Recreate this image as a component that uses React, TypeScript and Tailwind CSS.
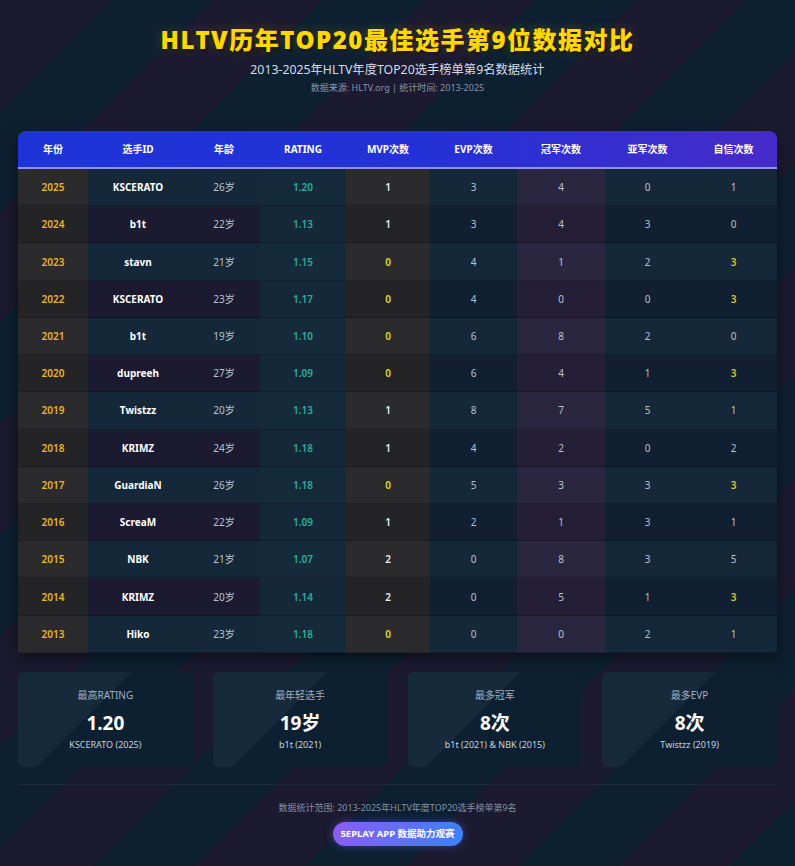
import React from "react";

type Row = {
  year: string;
  id: string;
  age: string;
  rating: string;
  mvp: number;
  evp: number;
  champ: number;
  runner: number;
  conf: number;
};

const rows: Row[] = [
  { year: "2025", id: "KSCERATO", age: "26岁", rating: "1.20", mvp: 1, evp: 3, champ: 4, runner: 0, conf: 1 },
  { year: "2024", id: "b1t", age: "22岁", rating: "1.13", mvp: 1, evp: 3, champ: 4, runner: 3, conf: 0 },
  { year: "2023", id: "stavn", age: "21岁", rating: "1.15", mvp: 0, evp: 4, champ: 1, runner: 2, conf: 3 },
  { year: "2022", id: "KSCERATO", age: "23岁", rating: "1.17", mvp: 0, evp: 4, champ: 0, runner: 0, conf: 3 },
  { year: "2021", id: "b1t", age: "19岁", rating: "1.10", mvp: 0, evp: 6, champ: 8, runner: 2, conf: 0 },
  { year: "2020", id: "dupreeh", age: "27岁", rating: "1.09", mvp: 0, evp: 6, champ: 4, runner: 1, conf: 3 },
  { year: "2019", id: "Twistzz", age: "20岁", rating: "1.13", mvp: 1, evp: 8, champ: 7, runner: 5, conf: 1 },
  { year: "2018", id: "KRIMZ", age: "24岁", rating: "1.18", mvp: 1, evp: 4, champ: 2, runner: 0, conf: 2 },
  { year: "2017", id: "GuardiaN", age: "26岁", rating: "1.18", mvp: 0, evp: 5, champ: 3, runner: 3, conf: 3 },
  { year: "2016", id: "ScreaM", age: "22岁", rating: "1.09", mvp: 1, evp: 2, champ: 1, runner: 3, conf: 1 },
  { year: "2015", id: "NBK", age: "21岁", rating: "1.07", mvp: 2, evp: 0, champ: 8, runner: 3, conf: 5 },
  { year: "2014", id: "KRIMZ", age: "20岁", rating: "1.14", mvp: 2, evp: 0, champ: 5, runner: 1, conf: 3 },
  { year: "2013", id: "Hiko", age: "23岁", rating: "1.18", mvp: 0, evp: 0, champ: 0, runner: 2, conf: 1 },
];

const headers = ["年份", "选手ID", "年龄", "RATING", "MVP次数", "EVP次数", "冠军次数", "亚军次数", "自信次数"];

const cards = [
  { label: "最高RATING", value: "1.20", sub: "KSCERATO (2025)" },
  { label: "最年轻选手", value: "19岁", sub: "b1t (2021)" },
  { label: "最多冠军", value: "8次", sub: "b1t (2021) & NBK (2015)" },
  { label: "最多EVP", value: "8次", sub: "Twistzz (2019)" },
];

const GRID = "grid grid-cols-[70px_100px_72px_86px_84px_87px_88px_85px_87px]";

export default function App() {
  return (
    <div className="min-h-[866px] w-full font-['Noto_Sans','Noto_Sans_CJK_SC',sans-serif] bg-[repeating-linear-gradient(135deg,#1c1a30_0px,#1c1a30_78px,#0d2032_78px,#0d2032_150px)]">
      <div className="px-[18px] pt-6">
        <h1 className="text-center text-[24px] font-black leading-8 tracking-[1.5px] text-[#ffd700] [text-shadow:2px_2px_4px_rgba(0,0,0,0.6),0_0_12px_rgba(255,215,0,0.25)]">
          HLTV历年TOP20最佳选手第9位数据对比
        </h1>
        <p className="mt-[5px] text-center text-[12.3px] leading-[18px] text-[#d5dce6]">
          2013-2025年HLTV年度TOP20选手榜单第9名数据统计
        </p>
        <p className="mt-[2px] text-center text-[9px] leading-[14px] text-[#8797ab]">
          数据来源: HLTV.org | 统计时间: 2013-2025
        </p>

        <div className="mt-[36px] overflow-hidden rounded-t-[8px] shadow-[0_6px_16px_rgba(0,0,0,0.45)]">
          <div className={`${GRID} h-[38px] items-center border-b-2 border-[#8c93f0] bg-[linear-gradient(90deg,#1d34d8_0%,#2431d6_55%,#472bc9_100%)]`}>
            {headers.map((h) => (
              <div key={h} className="text-center text-[10px] font-bold text-white">
                {h}
              </div>
            ))}
          </div>
          {rows.map((r, i) => {
            const a = i % 2 === 0;
            const base = a ? "bg-[#15283a]" : "bg-[#1b1a30]";
            const gray = a ? "bg-[#2b2b2d]" : "bg-[#242426]";
            const teal = a ? "bg-[#152a3a]" : "bg-[#14283a]";
            const purple = a ? "bg-[#2b2640]" : "bg-[#241f37]";
            const navy = a ? "bg-[#15283a]" : "bg-[#101f31]";
            const cell = "flex h-[37.23px] items-center justify-center text-[10px] shadow-[inset_0_-1px_0_rgba(0,0,0,0.22)]";
            return (
              <div key={r.year} className={GRID}>
                <div className={`${cell} ${gray} font-semibold text-[#e9b52a]`}>{r.year}</div>
                <div className={`${cell} ${base} font-bold text-white`}>{r.id}</div>
                <div className={`${cell} ${base} text-[#b8c2d0]`}>{r.age}</div>
                <div className={`${cell} ${teal} font-semibold text-[#2fae9c]`}>{r.rating}</div>
                <div className={`${cell} ${gray} font-semibold ${r.mvp === 0 ? "text-[#e2d82a]" : "text-[#e8ecf2]"}`}>{r.mvp}</div>
                <div className={`${cell} ${navy} text-[#b8c2d0]`}>{r.evp}</div>
                <div className={`${cell} ${purple} text-[#b8c2d0]`}>{r.champ}</div>
                <div className={`${cell} ${navy} text-[#b8c2d0]`}>{r.runner}</div>
                <div className={`${cell} ${navy} ${r.conf === 3 ? "font-semibold text-[#dcc52a]" : "text-[#b8c2d0]"}`}>{r.conf}</div>
              </div>
            );
          })}
        </div>

        <div className="mt-[19px] grid grid-cols-4 gap-[20px]">
          {cards.map((c) => (
            <div
              key={c.label}
              className="flex h-[95px] flex-col items-center rounded-[6px] bg-[linear-gradient(135deg,#172a3c_0%,#172a3c_42%,#0d2032_42%,#0d2032_100%)] pt-4"
            >
              <div className="text-[10px] leading-[14px] text-[#9fb0c2]">{c.label}</div>
              <div className="mt-[8px] text-[19px] font-bold leading-[26px] text-white">{c.value}</div>
              <div className="mt-[3px] text-[9px] leading-[12px] text-[#c9d1da]">{c.sub}</div>
            </div>
          ))}
        </div>

        <div className="mt-[17px] flex flex-col items-center border-t border-[#1b2b3c] pb-6 pt-[17px]">
          <p className="text-[9px] leading-[12px] text-[#8393a5]">
            数据统计范围: 2013-2025年HLTV年度TOP20选手榜单第9名
          </p>
          <div className="mt-[8px] flex h-[24px] w-[130px] items-center justify-center rounded-full bg-[linear-gradient(90deg,#8b5cf6,#3b82f6)] text-[9.5px] font-bold text-white shadow-[0_0_8px_rgba(99,102,241,0.45)]">
            5EPLAY APP 数据助力观赛
          </div>
        </div>
      </div>
    </div>
  );
}
